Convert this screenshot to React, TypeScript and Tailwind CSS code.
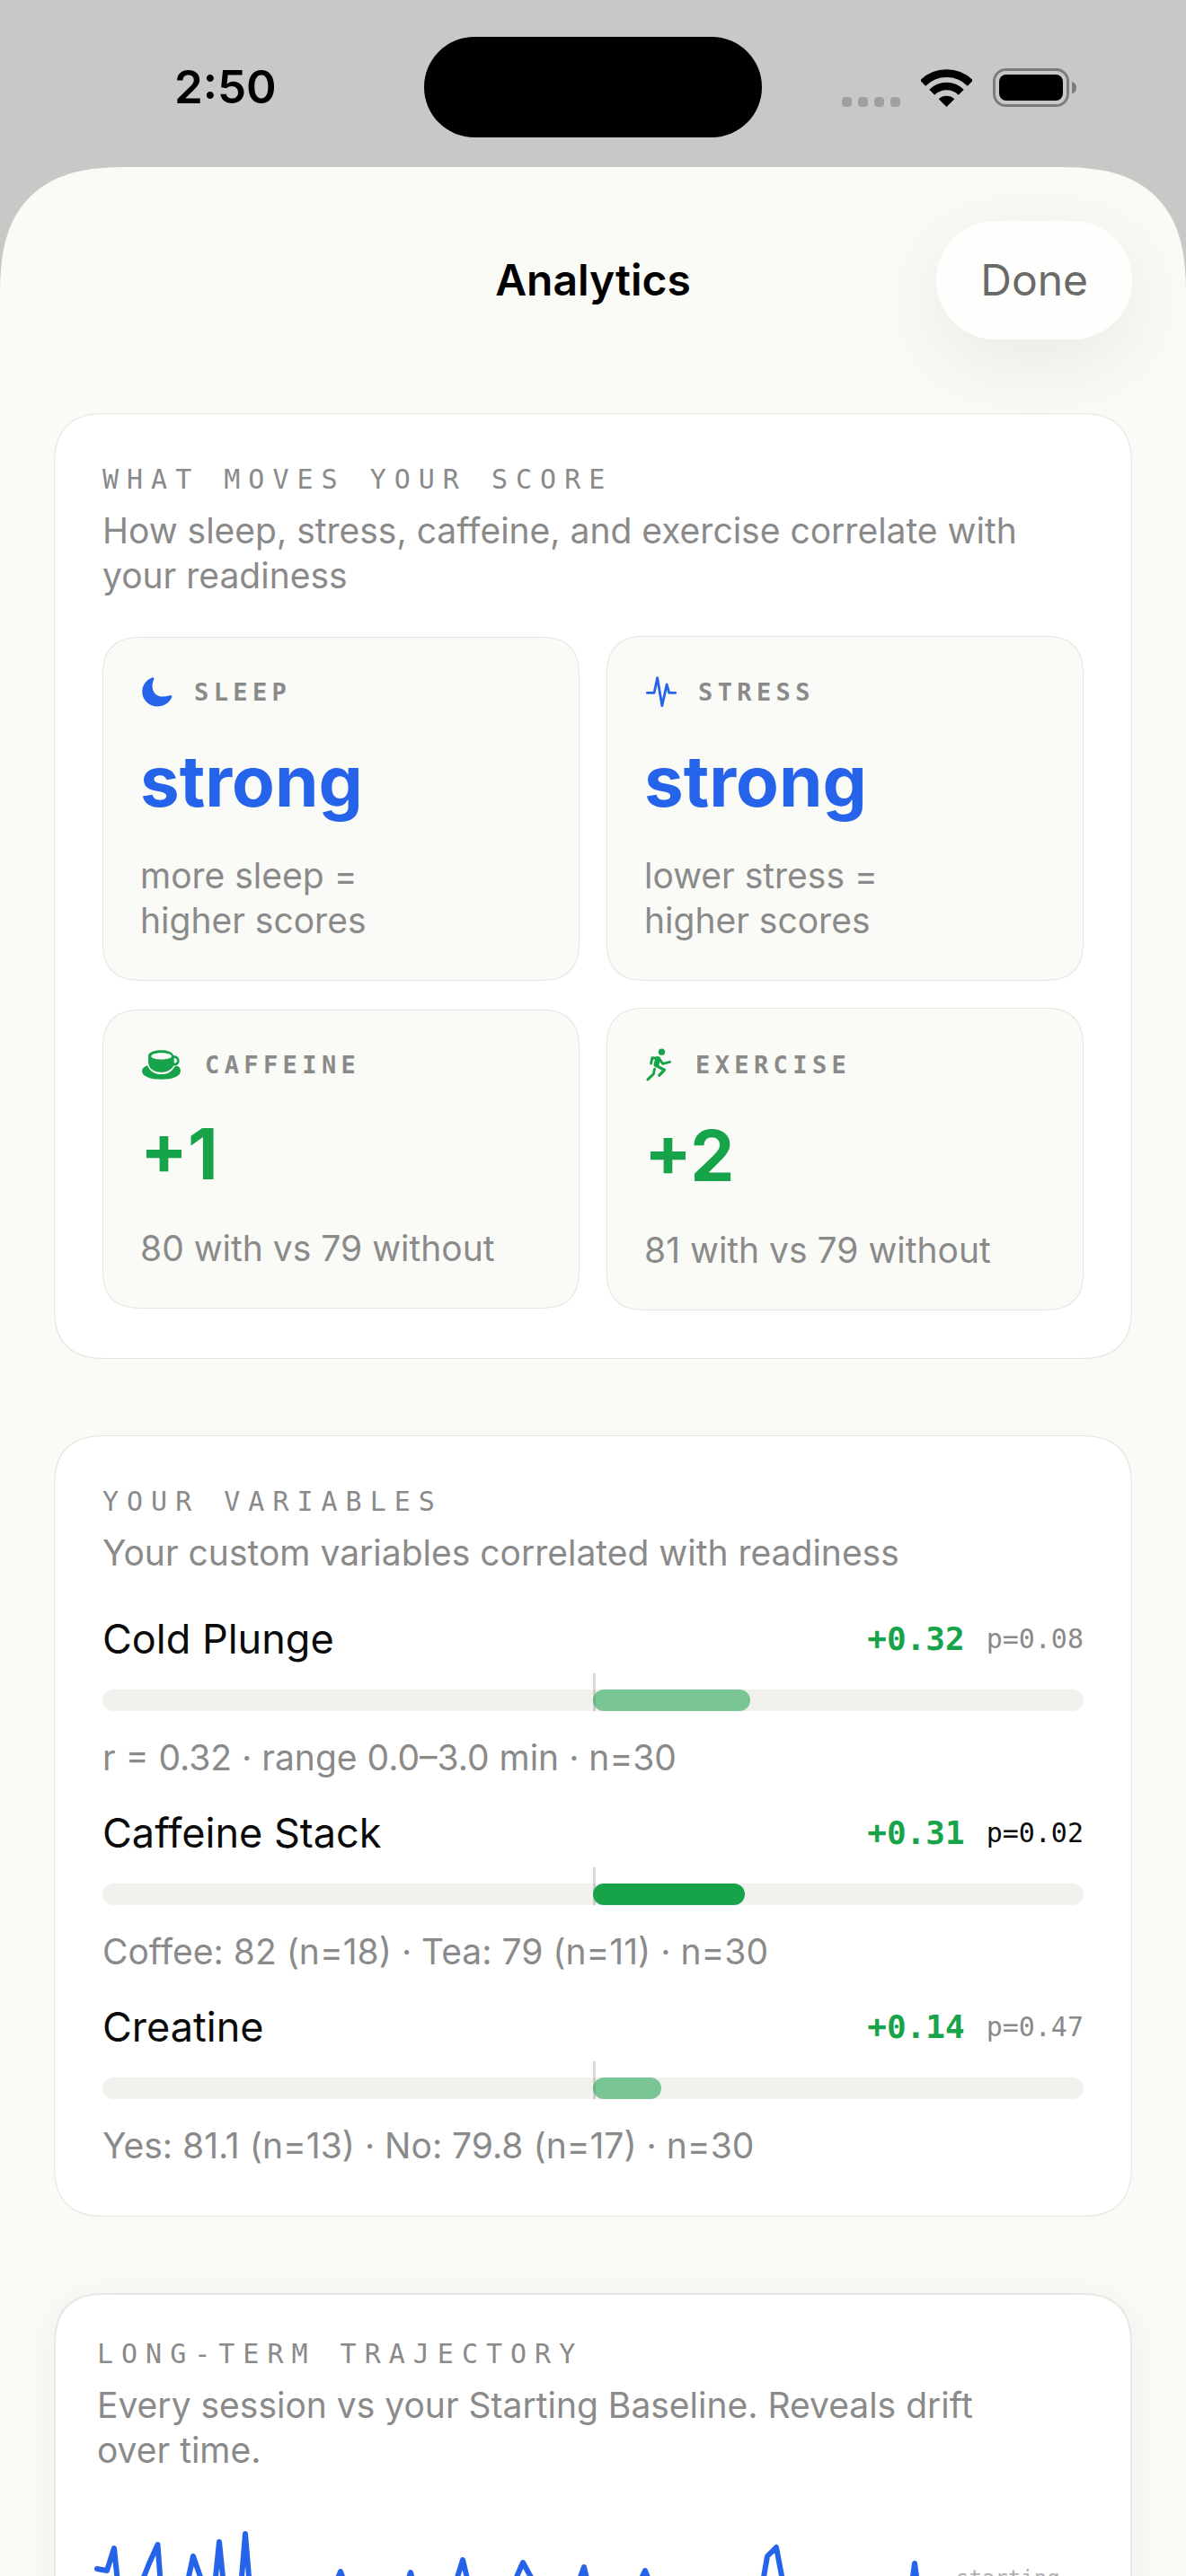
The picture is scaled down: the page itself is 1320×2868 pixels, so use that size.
import React from "react";

type Tone = "blue" | "green";

interface Factor {
  id: string;
  label: string;
  value: string;
  tone: Tone;
  lines: string[];
  icon: React.ReactNode;
}

interface Variable {
  name: string;
  r: number;
  p: string;
  significant: boolean;
  detail: string;
}

function MoonIcon() {
  return (
    <svg aria-hidden="true" viewBox="282 721 80 78" className="h-[33px] w-[34px]" fill="currentColor">
      <path d="M309 722C314 720 314 725 312 729C306 745 310 757 316 764C325 774 341 773 355 769C360 768 362 771 360 775C353 789 339 798 323 798C300 798 282.5 781 282.5 759C282.5 742 293 727 309 722Z" />
    </svg>
  );
}

function PulseIcon() {
  return (
    <svg
      aria-hidden="true"
      viewBox="184 721 78 78"
      className="my-[3px] size-[34px]"
      fill="none"
      stroke="currentColor"
      strokeWidth="6.5"
      strokeLinecap="round"
      strokeLinejoin="round"
    >
      <path d="M187 763H205L213 725L225 796L237 742L243 763H259" />
    </svg>
  );
}

function CupIcon() {
  return (
    <svg aria-hidden="true" viewBox="30 57 130 100" className="mr-[3px] h-[33px] w-[43px]" fill="currentColor">
      <path
        fillRule="evenodd"
        d="M51 78C51 65 70 58 94 58C116 58 133 64 136 75C147 74 156 83 156 93C156 103 148 111 136 110C130 124 115 132 94 132C66 132 51 116 51 94ZM61 78C61 84 76 89 95 89C114 89 130 84 130 78C130 72 114 67 95 67C76 67 61 72 61 78ZM138 84V101C144 102 148 98 148 93C148 88 144 84 138 84Z"
      />
      <path d="M48 109C36 113 30 120 30 128C30 146 58 156 95 156C132 156 160 146 160 128C160 119 156 113 148 111C143 111 139 114 136 119C128 132 113 139 95 139C72 139 57 128 48 109Z" />
    </svg>
  );
}

function RunnerIcon() {
  return (
    <svg
      aria-hidden="true"
      viewBox="63 51 85 111"
      className="my-[3px] mr-[3px] h-[37px] w-[28px]"
      fill="none"
      stroke="currentColor"
      strokeLinecap="round"
      strokeLinejoin="round"
    >
      <circle cx="116" cy="63" r="11" fill="currentColor" stroke="none" />
      <path d="M106 85L84 83L80 102" strokeWidth="9" />
      <path d="M107 86L120 103L143 97" strokeWidth="9" />
      <path d="M103 87L98 106" strokeWidth="18" />
      <path d="M99 110L125 124L108 142" strokeWidth="10" />
      <path d="M92 121L88 138L69 156" strokeWidth="9" />
    </svg>
  );
}

function WifiIcon() {
  return (
    <svg aria-hidden="true" viewBox="315 75 171 126" className="h-[42px] w-[57px] text-black" fill="none" stroke="currentColor">
      <path d="M321.3 121.8A112 112 0 0 1 479.7 121.8" strokeWidth="26" />
      <path d="M351.7 152.2A69 69 0 0 1 449.3 152.2" strokeWidth="25" />
      <path d="M400.5 201L374 174.5A40 40 0 0 1 427 174.5Z" fill="currentColor" stroke="none" />
    </svg>
  );
}

function BatteryIcon() {
  return (
    <svg aria-hidden="true" viewBox="0 0 93 43" className="h-[43px] w-[93px]">
      <rect x="1.5" y="1.5" width="82" height="40" rx="13" fill="none" stroke="#7c7c7a" strokeWidth="3" />
      <rect x="7" y="7" width="71" height="29" rx="8" fill="#000" />
      <path d="M88 15C91 16 93 18 93 21.5C93 25 91 27.5 88 28.5Z" fill="#7c7c7a" />
    </svg>
  );
}

const toneClass: Record<Tone, string> = {
  blue: "text-[#2563eb]",
  green: "text-[#16a34a]",
};

const factorRows: Factor[][] = [
  [
    { id: "sleep", label: "SLEEP", value: "strong", tone: "blue", lines: ["more sleep =", "higher scores"], icon: <MoonIcon /> },
    { id: "stress", label: "STRESS", value: "strong", tone: "blue", lines: ["lower stress =", "higher scores"], icon: <PulseIcon /> },
  ],
  [
    { id: "caffeine", label: "CAFFEINE", value: "+1", tone: "green", lines: ["80 with vs 79 without"], icon: <CupIcon /> },
    { id: "exercise", label: "EXERCISE", value: "+2", tone: "green", lines: ["81 with vs 79 without"], icon: <RunnerIcon /> },
  ],
];

const variables: Variable[] = [
  { name: "Cold Plunge", r: 0.32, p: "0.08", significant: false, detail: "r = 0.32 · range 0.0–3.0 min · n=30" },
  { name: "Caffeine Stack", r: 0.31, p: "0.02", significant: true, detail: "Coffee: 82 (n=18) · Tea: 79 (n=11) · n=30" },
  { name: "Creatine", r: 0.14, p: "0.47", significant: false, detail: "Yes: 81.1 (n=13) · No: 79.8 (n=17) · n=30" },
];

const trajectory =
  "0,77 11,79 19,54 27,130 38,140 52,86 58,71 67.5,50 72,110 84,150 94,130 102,86 107,63 115,86 124,140 132,86 136,47 140,86 150,160 161,86 165,38 169,86 180,150 205,120 230,160 255,120 271,80 285,120 310,160 335,125 349,81 362,130 385,150 400,90 407,67 415,100 440,150 460,100 467,86 474,70 486,92 510,150 530,110 538,86 542,75 548,100 575,150 600,100 610,79 622,110 660,160 700,130 730,110 742,86 746,63 756,53 763,90 780,150 820,120 860,160 895,140 906,100 910,71 914,100 925,150";

function SectionHeading({ title, children }: { title: string; children: React.ReactNode }) {
  return (
    <header className="flex flex-col gap-3 text-[#8a8a8a]">
      <h2 className="font-['DejaVu_Sans_Mono',monospace] text-[30px] leading-[40px] tracking-[0.3em]">{title}</h2>
      <p className="pr-[60px] text-[39px] leading-[50px]">{children}</p>
    </header>
  );
}

function FactorTile({ factor }: { factor: Factor }) {
  return (
    <article className="flex flex-col gap-[30px] rounded-[45px] border border-[#e4e5de] bg-[#fafbf7] p-[41px] [corner-shape:superellipse(1.4)]">
      <div className={`flex items-center gap-6 pl-0.5 ${toneClass[factor.tone]}`}>
        {factor.icon}
        <h3 className="font-['DejaVu_Sans_Mono',monospace] text-[27px] leading-[39px] font-bold tracking-[0.2em] text-[#8a8a8a]">
          {factor.label}
        </h3>
      </div>
      <p className={`text-[78px] leading-[100px] font-bold ${toneClass[factor.tone]}`}>{factor.value}</p>
      <p className="text-[39px] leading-[50px] text-[#8a8a8a]">
        {factor.lines.map((line) => (
          <span key={line} className="block">
            {line}
          </span>
        ))}
      </p>
    </article>
  );
}

function VariableRow({ variable }: { variable: Variable }) {
  return (
    <li>
      <div className="flex items-center justify-between">
        <h3 className="text-[45px] leading-[57px] text-[#0a0a0a]">{variable.name}</h3>
        <div className="flex items-center gap-6 font-['DejaVu_Sans_Mono',monospace]">
          <span className="text-[36px] leading-[48px] font-bold text-[#16a34a]">+{variable.r.toFixed(2)}</span>
          <span className={`text-[30px] leading-[40px] ${variable.significant ? "text-[#0a0a0a]" : "text-[#8a8a8a]"}`}>
            p={variable.p}
          </span>
        </div>
      </div>
      <div className="relative mt-2.5 mb-[27px] pt-[18px]" role="img" aria-label={`${variable.name} correlation ${variable.r}`}>
        <div className="h-6 rounded-full bg-[#f1f2ed]" />
        <div className="absolute top-0 bottom-0 left-1/2 w-[3px] bg-black/15" />
        <div
          className={`absolute bottom-0 left-1/2 h-6 rounded-full bg-[#16a34a] ${variable.significant ? "" : "opacity-55"}`}
          style={{ width: `${variable.r * 50}%` }}
        />
      </div>
      <p className="text-[39px] leading-[50px] text-[#8a8a8a]">{variable.detail}</p>
    </li>
  );
}

function StatusBar() {
  return (
    <div className="grid grid-cols-[1fr_376px_1fr] items-center pt-[41px] pb-[33px]">
      <div className="pl-[194px] text-[51px] leading-[60px] font-semibold text-black">2:50</div>
      <div className="h-28 rounded-full bg-black" />
      <div className="flex items-end justify-end gap-[23px] pr-[122px]">
        <div className="flex gap-[7px]">
          <span className="size-[11px] rounded-[4px] bg-[#a0a09e]" />
          <span className="size-[11px] rounded-[4px] bg-[#a0a09e]" />
          <span className="size-[11px] rounded-[4px] bg-[#a0a09e]" />
          <span className="size-[11px] rounded-[4px] bg-[#a0a09e]" />
        </div>
        <WifiIcon />
        <BatteryIcon />
      </div>
    </div>
  );
}

export default function App() {
  return (
    <div className="flex h-screen flex-col overflow-hidden bg-[#c8c8c6] font-['Inter',sans-serif]">
      <StatusBar />
      <main className="min-h-0 flex-1 overflow-hidden rounded-t-[144px] bg-[#fafbf7] px-[60px] pt-[60px] [corner-shape:superellipse(1.4)]">
        <div className="mb-[82px] grid grid-cols-[1fr_auto_1fr] items-center">
          <h1 className="col-start-2 text-[48px] leading-[58px] font-semibold text-black">Analytics</h1>
          <button
            type="button"
            className="h-[132px] justify-self-end rounded-full bg-[#fefffc] px-[49px] text-[48px] leading-[58px] text-[#6a6a69] shadow-[0_24px_96px_rgba(0,0,0,0.08)]"
          >
            Done
          </button>
        </div>

        <div className="flex flex-col gap-[85px]">
          <section className="flex flex-col gap-[42px] rounded-[60px] border border-[#e4e5de] bg-white p-[53px] [corner-shape:superellipse(1.4)]">
            <SectionHeading title="WHAT MOVES YOUR SCORE">
              How sleep, stress, caffeine, and exercise correlate with your readiness
            </SectionHeading>
            <div className="flex flex-col gap-[30px]">
              {factorRows.map((row) => (
                <div key={row[0].id} className="grid grid-cols-2 items-center gap-[30px]">
                  {row.map((factor) => (
                    <FactorTile key={factor.id} factor={factor} />
                  ))}
                </div>
              ))}
            </div>
          </section>

          <section className="flex flex-col gap-[42px] rounded-[60px] border border-[#e4e5de] bg-white p-[53px] [corner-shape:superellipse(1.4)]">
            <SectionHeading title="YOUR VARIABLES">Your custom variables correlated with readiness</SectionHeading>
            <ul className="flex flex-col gap-[30px]">
              {variables.map((variable) => (
                <VariableRow key={variable.name} variable={variable} />
              ))}
            </ul>
          </section>

          <section className="flex flex-col gap-[30px] rounded-[60px] border-2 border-[#e8e9e4] bg-white p-[46px] shadow-[0_6px_48px_rgba(0,0,0,0.05)] [corner-shape:superellipse(1.4)]">
            <SectionHeading title="LONG-TERM TRAJECTORY">
              Every session vs your Starting Baseline. Reveals drift over time.
            </SectionHeading>
            <div className="flex items-start gap-5">
              <svg
                role="img"
                aria-label="Readiness per session"
                viewBox="0 0 936 260"
                className="min-w-0 flex-1 overflow-visible"
                fill="none"
                stroke="#2563eb"
                strokeWidth="6"
                strokeLinecap="round"
                strokeLinejoin="round"
              >
                <polyline points={trajectory} />
              </svg>
              <span className="w-[148px] pt-[72px] font-['DejaVu_Sans_Mono',monospace] text-[24px] leading-[32px] text-[#b0b0ae]">
                starting
              </span>
            </div>
          </section>
        </div>
      </main>
    </div>
  );
}
